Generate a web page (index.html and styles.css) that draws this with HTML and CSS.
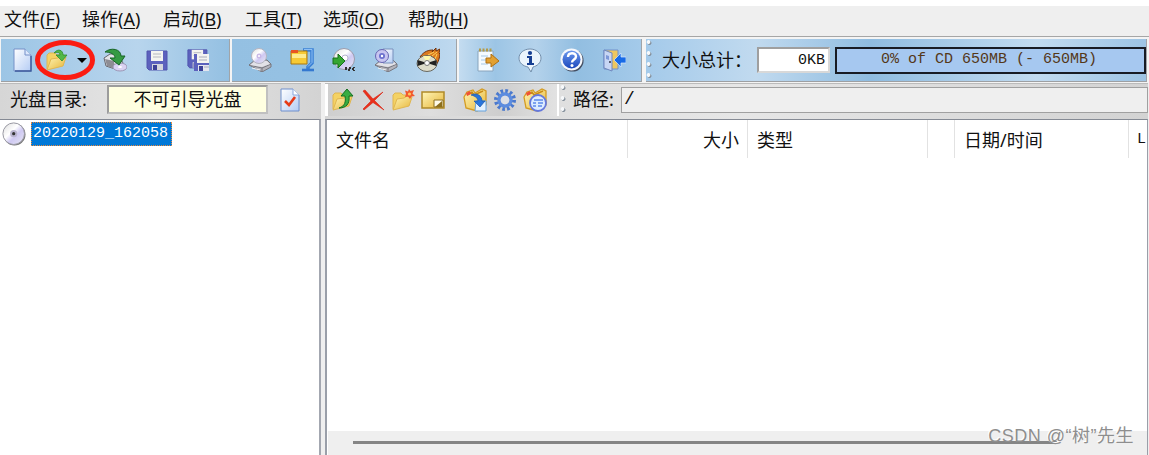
FILE: index.html
```html
<!DOCTYPE html>
<html lang="zh-CN">
<head>
    <meta charset="UTF-8">
    <meta name="viewport" content="width=device-width, initial-scale=1.0">
    <title>20220129_162058</title>
    <link rel="stylesheet" href="styles.css">
</head>
<body>
    <!-- shared gradients and the pieces several icons reuse -->
    <svg class="defs" width="0" height="0">
        <defs>
            <linearGradient id="paper" x1="0" y1="0" x2="1" y2="1">
                <stop offset="0" stop-color="#ffffff"/>
                <stop offset="1" stop-color="#b4ccf4"/>
            </linearGradient>
            <linearGradient id="gold" x1="0" y1="0" x2="1" y2="1">
                <stop offset="0" stop-color="#fff6b8"/>
                <stop offset="1" stop-color="#e6b436"/>
            </linearGradient>
            <linearGradient id="disc" x1="0" y1="0" x2="1" y2="1">
                <stop offset="0" stop-color="#dcdcdc"/>
                <stop offset=".4" stop-color="#ffffff"/>
                <stop offset=".6" stop-color="#cfc9f2"/>
                <stop offset="1" stop-color="#e8e8f4"/>
            </linearGradient>
            <linearGradient id="blue" x1="0" y1="0" x2="0" y2="1">
                <stop offset="0" stop-color="#6a98ee"/>
                <stop offset="1" stop-color="#1c48bc"/>
            </linearGradient>
            <g id="folder">
                <path d="M2 21V7l2-2h6l2 2h7v4" fill="#f4d264" stroke="#e0b650"/>
                <path d="M2 22l4-11 7-1 3-2 5 1-3 9z" fill="url(#gold)" stroke="#e0b650"/>
            </g>
            <g id="drive">
                <path d="M1 17l6-5h12l4 4v3l-9 5z" fill="#b4b4bc" stroke="#77777f"/>
                <path d="M1 17l13 3 9-4M14 20v4" fill="none" stroke="#77777f"/>
                <path d="M2 17l5-4h12l3 3-8 3z" fill="#e2e2e8"/>
                <path d="M4 20l8 2" stroke="#f4f4f6"/>
            </g>
            <g id="floppy">
                <path d="M2 3h20v19H4l-2-2z" fill="#5c61bd" stroke="#5155ae"/>
                <path d="M6 3h12v10H6z" fill="#f4f4f0"/>
                <path d="M8 6h8M8 9h8" stroke="#b6b8c0"/>
                <path d="M7 16h11v6H7z" fill="#d5d6dc"/>
                <path d="M8 17h4v5H8z" fill="#3d4196"/>
            </g>
            <g id="folderback">
                <path d="M3 20L1 9l3-5 6-2 2 3 7-4 4 2v14l-9 6z" fill="url(#gold)" stroke="#d49b22" stroke-width="1.3"/>
                <path d="M4 7l5-3 2 3 9-4" fill="none" stroke="#c98b18" stroke-width="1.5"/>
                <path d="M3 5l4-2 1 3-4 2z" fill="#ef5136"/>
            </g>
        </defs>
    </svg>

    <div class="window">
        <div class="menubar">
            <span>文件(<u>F</u>)</span>
            <span>操作(<u>A</u>)</span>
            <span>启动(<u>B</u>)</span>
            <span>工具(<u>T</u>)</span>
            <span>选项(<u>O</u>)</span>
            <span>帮助(<u>H</u>)</span>
        </div>

        <div class="toolbar">
            <div class="group group-file">
                <svg class="icon" viewBox="0 0 24 24">
                    <path d="M3 1h11l6 6v16H3z" fill="url(#paper)" stroke="#7590c8"/>
                    <path d="M20 8v15H4" fill="none" stroke="#3d5a9c" stroke-width="1.4"/>
                    <path d="M14 1v6h6" fill="#dce8fc" stroke="#7590c8"/>
                </svg>
                <div class="open">
                    <svg class="icon" viewBox="0 0 24 24">
                        <use href="#folder"/>
                        <path d="M9 5c4-5 9-3 9 2h4l-5 6-6-6h4c0-3-3-3-6-2z" fill="#52b848" stroke="#2f8d32" stroke-width=".8"/>
                    </svg>
                    <span class="arrow"></span>
                    <svg class="ring" viewBox="0 0 60 40">
                        <ellipse cx="30" cy="20" rx="27.500" ry="17.500" fill="none" stroke="#fb1c12" stroke-width="5"/>
                    </svg>
                </div>
                <svg class="icon" viewBox="0 0 24 24">
                    <path d="M1 10l6-4h8l5 9-8 6-9-3z" fill="#e4e4e8" stroke="#66666c"/>
                    <path d="M2 11l9 2 1 8-8-3z" fill="#8d8d94"/>
                    <ellipse cx="17" cy="19" rx="7" ry="4" fill="#d9d2f2" stroke="#9b96b4"/>
                    <ellipse cx="17" cy="19" rx="2" ry="1" fill="#fff"/>
                    <path d="M2 4c6-5 16-3 16 4h4l-6 9-9-7h5c0-4-5-6-10-6z" fill="#359a42" stroke="#176526"/>
                </svg>
                <svg class="icon" viewBox="0 0 24 24"><use href="#floppy"/></svg>
                <svg class="icon" viewBox="0 0 24 24">
                    <use href="#floppy" transform="translate(-1 -1) scale(.95)"/>
                    <path d="M7 6h15v17H7z" fill="#5c61bd"/>
                    <path d="M10 6h12v9H10z" fill="#f4f4f0"/>
                    <path d="M12 9h8M12 12h8" stroke="#aaacbc"/>
                    <path d="M11 17h11v6H11z" fill="#e5e6ee"/>
                    <path d="M12 18h4v5h-4z" fill="#3d4196"/>
                    <path d="M17 19h5" stroke="#aaacbc"/>
                </svg>
            </div>

            <div class="group group-tools">
                <svg class="icon" viewBox="0 0 24 24">
                    <use href="#drive"/>
                    <circle cx="11" cy="8" r="7.5" fill="url(#disc)" stroke="#b4b4c0"/>
                    <circle cx="11" cy="8" r="2.5" fill="#c9b8e6"/>
                    <circle cx="11" cy="8" r="1" fill="#fff"/>
                </svg>
                <svg class="icon" viewBox="0 0 24 24">
                    <path d="M13 2h9v13l-4 4v3" fill="none" stroke="#3d82d6" stroke-width="3.600"/>
                    <path d="M14 1.500h8v13l-4 4" fill="none" stroke="#8ec0f4"/>
                    <path d="M12 22h12" stroke="#3478d0" stroke-width="2.600"/>
                    <path d="M1 3h16v13H1z" fill="#f7ca35" stroke="#a97810"/>
                    <path d="M2 6h14v4H2z" fill="#fdec91"/>
                    <path d="M1 2h7v3H1z" fill="#e85424"/>
                </svg>
                <svg class="icon" viewBox="0 0 24 24">
                    <circle cx="12" cy="11" r="10.5" fill="url(#disc)" stroke="#9c9cac"/>
                    <circle cx="13" cy="10" r="3" fill="#fff" stroke="#b7b3ce"/>
                    <path d="M1 10h5V6l7 7-7 7v-4H1z" fill="#35a632" stroke="#16701b"/>
                    <path d="M13 19h2v3h-2zM17 19h2v2h-2zM16 21h2v2h-2zM21 19h2v1h-2zM20 20h2v2h-2zM21 22h2v1h-2z" fill="#333"/>
                </svg>
                <svg class="icon" viewBox="0 0 24 24">
                    <use href="#drive"/>
                    <path d="M9 1h10v14H9z" fill="url(#paper)" stroke="#7890bc"/>
                    <circle cx="8" cy="8" r="6.5" fill="#c8c5f0" stroke="#6665b2"/>
                    <circle cx="8" cy="8" r="3" fill="#6c71ce"/>
                    <circle cx="8" cy="8" r="1.2" fill="#fff"/>
                </svg>
                <svg class="icon" viewBox="0 0 24 24">
                    <path d="M4 9C8 3 13 2 17 2l-1 2 4-4v3l4-2-1 4 1 1c-1 8-4 13-9 14z" fill="#dc7b20" stroke="#70300b"/>
                    <path d="M12 7l6-3M16 8l5-4M19 11l2-5" stroke="#ffd55c"/>
                    <ellipse cx="11" cy="15.500" rx="10" ry="8" fill="#dddccb" stroke="#686860"/>
                    <path d="M11 15L1.500 12v6zM11 15l9.500-3v6z" fill="#222"/>
                    <path d="M11 15L7 8h8z" fill="#fff8a8"/>
                    <circle cx="11" cy="15" r="2.500" fill="#fff" stroke="#777"/>
                </svg>
            </div>

            <div class="group group-help">
                <svg class="icon" viewBox="0 0 24 24">
                    <path d="M2 3h15v20H2z" fill="#f5fbff" stroke="#89a4bc"/>
                    <path d="M3 2h13" stroke="#b49b48" stroke-width="3" stroke-dasharray="2 1.5"/>
                    <path d="M5 8h7M5 12h5M5 16h7" stroke="#a5c7e4"/>
                    <path d="M10 10h5V6l8 7-8 6v-4h-5z" fill="#e2a132" stroke="#af7013"/>
                </svg>
                <svg class="icon" viewBox="0 0 24 24">
                    <path d="M12 1c6 0 11 4 11 9s-4 8-8 9l-2 5-3-5C5 18 1 15 1 10s5-9 11-9z" fill="#eaf4fc" stroke="#738fac"/>
                    <circle cx="12" cy="5" r="2.1" fill="#173f92"/>
                    <path d="M9 8h5v7h2v2H9v-2h2v-5H9z" fill="#173f92"/>
                </svg>
                <svg class="icon" viewBox="0 0 24 24">
                    <circle cx="12.6" cy="12.6" r="11" fill="#444e62"/>
                    <circle cx="11.5" cy="11.5" r="11" fill="#f6f8fc"/>
                    <circle cx="11.5" cy="11.5" r="9" fill="url(#blue)"/>
                    <path d="M8 9c0-5 8-5 8-.5 0 3-4 3-4 6" fill="none" stroke="#fff" stroke-width="2.4"/>
                    <circle cx="12" cy="17.5" r="1.5" fill="#fff"/>
                </svg>
                <svg class="icon" viewBox="0 0 24 24">
                    <path d="M2 2h14v19H2z" fill="#edc760" stroke="#7191cc"/>
                    <path d="M2 2l8 3v18l-8-3z" fill="#c8d6f4" stroke="#6f87be"/>
                    <path d="M4 7l3 1v4l-3-1z" fill="#7d98d8"/>
                    <circle cx="8" cy="14" r="1" fill="#334"/>
                    <path d="M24 9h-5V5l-7 7 7 7v-4h5z" fill="#176ae6" stroke="#d7e8ff" stroke-width=".7"/>
                </svg>
            </div>

            <div class="group group-size">
                <span class="grip"></span>
                <span class="size-label">大小总计：</span>
                <span class="size-value">0KB</span>
                <span class="capacity">0% of CD 650MB (- 650MB)</span>
            </div>
        </div>

        <div class="panes">
            <div class="pane-left">
                <div class="subbar">
                    <span class="dir-label">光盘目录:</span>
                    <span class="boot">不可引导光盘</span>
                    <svg class="check" viewBox="0 0 20 24">
                        <path d="M1 1h12l6 6v16H1z" fill="url(#paper)" stroke="#6e8fcc"/>
                        <path d="M13 1v6h6" fill="#fff" stroke="#8ba8dc"/>
                        <path d="M5 13l4 4 6-8" fill="none" stroke="#e63a18" stroke-width="2.6"/>
                    </svg>
                </div>
                <div class="tree">
                    <svg class="icon" viewBox="0 0 24 24">
                        <circle cx="12.5" cy="12.5" r="11" fill="#777"/>
                        <circle cx="11.7" cy="11.7" r="10.8" fill="url(#disc)" stroke="#9a9aa4"/>
                        <circle cx="11.7" cy="11.7" r="3.6" fill="#b9b4cf"/>
                        <circle cx="11.7" cy="11.7" r="1.6" fill="#333"/>
                    </svg>
                    <span class="node">20220129_162058</span>
                </div>
            </div>

            <div class="pane-right">
                <div class="subbar">
                    <div class="subicons">
                        <svg class="icon" viewBox="0 0 24 24">
                            <use href="#folder"/>
                            <path d="M8 20c6-2 7-6 6-12h-4l6-7 6 7h-4c1 8-3 12-10 12z" fill="#38ad42" stroke="#14701f"/>
                        </svg>
                        <svg class="icon" viewBox="0 0 24 24">
                            <path d="M2 3l2-1 8 9 10-7-8.500 8.500L23 22l-11-7.500L3 22l-1-1 8-8z" fill="#e9301c" stroke="#d8210f" stroke-width=".6"/>
                        </svg>
                        <svg class="icon" viewBox="0 0 24 24">
                            <use href="#folder"/>
                            <path d="M18 1l1.500 2L23 2l-1.500 3.500L24 8l-3.500.5L19 11l-2-2.500-3 .5 1-3-1-3.500 3 1z" fill="#f2592d"/>
                            <circle cx="18.500" cy="6" r="1.600" fill="#ffc65c"/>
                        </svg>
                        <svg class="icon" viewBox="0 0 24 24">
                            <path d="M1 4h22v16H1z" fill="url(#gold)" stroke="#b08a28" stroke-width="1.500"/>
                            <path d="M13 12h9v7h-9z" fill="#fffbe8" stroke="#8d701e"/>
                            <path d="M14 19l7-6v6z" fill="#8d701e"/>
                        </svg>
                        <svg class="icon gap" viewBox="0 0 24 24">
                            <use href="#folderback"/>
                            <path d="M13 13h10v10H12z" fill="#e4f2fe" stroke="#65a2de"/>
                            <path d="M8 7c6-3 11 1 11 6h3l-5 6-6-6h4c0-3-3-5-7-6z" fill="#2875da" stroke="#1957ae" stroke-width=".7"/>
                        </svg>
                        <svg class="icon" viewBox="0 0 24 24">
                            <circle cx="12" cy="12" r="9" fill="none" stroke="#4a79ce" stroke-width="4" stroke-dasharray="2.600 2.110"/>
                            <circle cx="12" cy="12" r="6" fill="none" stroke="#5c8cdf" stroke-width="3.400"/>
                            <circle cx="12" cy="12" r="4.300" fill="#dcdfe6"/>
                        </svg>
                        <svg class="icon" viewBox="0 0 24 24">
                            <use href="#folderback"/>
                            <circle cx="15" cy="15" r="8" fill="#dcebff" stroke="#6478dc" stroke-width="1.800"/>
                            <path d="M11 12h9M10 15h3m2 0h5M10 18h3m2 0h4" stroke="#5c8bea" stroke-width="1.500"/>
                        </svg>
                    </div>
                    <span class="grip grip-gray"></span>
                    <span class="path-label">路径:</span>
                    <span class="path">/</span>
                </div>
                <div class="list">
                    <div class="columns">
                        <span>文件名</span>
                        <span class="right">大小</span>
                        <span>类型</span>
                        <span></span>
                        <span>日期/时间</span>
                        <span class="lba">L</span>
                    </div>
                    <div class="scroll">
                        <div class="thumb"></div>
                    </div>
                </div>
            </div>
        </div>
        <div class="watermark">CSDN @“树”先生</div>
    </div>
</body>
</html>
```

FILE: styles.css
```css
* {
    box-sizing: border-box;
}

body {
    margin: 0;
    background-color: #fff;
    font-family: "Noto Sans", "Noto Sans CJK SC", sans-serif;
    font-size: 18px;
    color: #111;
}

.defs {
    position: absolute;
}

.window {
    position: relative;
    width: 1149px;
    height: 455px;
    padding-top: 6px;
    overflow: hidden;
    display: flex;
    flex-direction: column;
}

.menubar {
    height: 31px;
    flex: none;
    padding-left: 4px;
    background-color: #efefef;
    border-bottom: 1px solid #a6a6a6;
    display: grid;
    grid-template-columns: 78px 81px 82px 78px 85px 90px;
    line-height: 27px;
    white-space: nowrap;
}

.menubar u {
    text-decoration-thickness: 1px;
    text-underline-offset: 2px;
}

.icon {
    width: 24px;
    height: 24px;
    flex: none;
    display: block;
}

/* main toolbar */
.toolbar {
    height: 46px;
    flex: none;
    padding: 2px 2px 2px 1px;
    background-color: #f4f4f4;
    display: flex;
}

.group {
    height: 43px;
    flex: none;
    display: flex;
    align-items: center;
    border-bottom: 1px solid #9d9fa2;
    border-right: 1px solid #a0a4a8;
    margin-right: 2px;
    background: linear-gradient(90deg, #94c0e2, #96c2e4 45%, #bfd9ef);
}

.group-file {
    width: 229px;
    padding-left: 10px;
    gap: 18px;
    background: linear-gradient(90deg, #9cc5e5, #b8d5ed 60%, #94c0e2);
}

.open {
    position: relative;
    width: 50px;
    margin-left: -8px;
    margin-right: -10px;
    display: flex;
    align-items: center;
    gap: 8px;
}

.arrow {
    border: 5px solid transparent;
    border-top-color: #000;
    border-bottom: none;
}

.ring {
    position: absolute;
    left: -10px;
    top: -8px;
    width: 60px;
    height: 40px;
}

.group-tools {
    width: 225px;
    padding-left: 16px;
    gap: 18px;
}

.group-help {
    width: 183px;
    padding-left: 17px;
    gap: 18px;
    background: linear-gradient(90deg, #c4dcf0, #9cc5e5 20%, #b4d2eb 42%, #92bee1 65%, #a4caea);
}

.group-size {
    width: 501px;
    margin: 0 0 0 2px;
    background: linear-gradient(90deg, #a4caea, #c1daef 22%, #8fbce0 45%, #c2dbf0 78%, #9dc4e4);
}

.grip {
    width: 6px;
    height: 100%;
    flex: none;
    background:
        radial-gradient(circle at 2.5px 3px, #f6f8fa 1.5px, transparent 2.2px) 0 0 / 6px 11px,
        radial-gradient(circle at 3.5px 4px, #84909c 1.5px, transparent 2.4px) 0 0 / 6px 11px;
}

.grip-gray {
    height: 32px;
}

.size-label {
    width: 95px;
    margin-left: 10px;
    white-space: nowrap;
    position: relative;
    top: -1px;
}

.size-value {
    width: 73px;
    height: 26px;
    margin-right: 5px;
    padding-right: 3px;
    border: 2px solid #9f9f9f;
    border-right-color: #d8d8d8;
    border-bottom-color: #d8d8d8;
    background-color: #fff;
    font: 15px/23px "Liberation Mono", monospace;
    text-align: right;
}

.capacity {
    width: 311px;
    height: 27px;
    padding-left: 44px;
    border: 2px solid #181c24;
    background-color: #a6c8f0;
    color: #543718;
    font: 15px/22px "Liberation Mono", monospace;
    white-space: pre;
}

/* lower area */
.panes {
    flex: 1;
    display: flex;
    background-color: #efefef;
}

.pane-left {
    width: 321px;
    margin-right: 4px;
    display: flex;
    flex-direction: column;
}

.pane-right {
    width: 823px;
    display: flex;
    flex-direction: column;
}

.subbar {
    height: 36px;
    flex: none;
    padding-bottom: 4px;
    display: flex;
    align-items: center;
    border-top: 1px solid #bbb;
    background: linear-gradient(90deg, #d6d6d6, #e6e6e6 50%, #d3d3d3);
}

.dir-label {
    width: 97px;
    margin-left: 10px;
    line-height: 24px;
    padding-bottom: 2px;
    white-space: nowrap;
}

.boot {
    width: 161px;
    height: 29px;
    border: 2px solid #9c9c9c;
    border-right-color: #c0c0c0;
    border-bottom-color: #c0c0c0;
    background-color: #ffffe1;
    line-height: 24px;
    text-align: center;
}

.check {
    width: 20px;
    height: 24px;
    margin-left: 12px;
}

.tree {
    flex: 1;
    padding: 2px 0 0 2px;
    border-top: 1px solid #858a94;
    border-right: 2px solid #a3a7b0;
    background-color: #fff;
    display: flex;
    align-items: flex-start;
}

.node {
    height: 24px;
    margin-left: 5px;
    padding: 0 3px 0 1px;
    border: 1px dotted #e98a3c;
    background-color: #0078d7;
    color: #fff;
    font: 15px/22px "Liberation Mono", monospace;
}

.subicons {
    width: 234px;
    height: 32px;
    padding-left: 3px;
    margin-right: 1px;
    border-left: 3px solid #fff;
    border-right: 2px solid #fff;
    display: flex;
    align-items: center;
    gap: 6px;
    background: linear-gradient(90deg, #cfcfcf, #dedede 45%, #cecece 75%, #e2e2e2);
}

.subicons .gap {
    margin-left: 12px;
}

.path-label {
    width: 48px;
    margin-left: 7px;
    line-height: 24px;
    padding-bottom: 2px;
    white-space: nowrap;
}

.path {
    flex: 1;
    height: 26px;
    padding-left: 2px;
    border: 1px solid #a0a0a0;
    background-color: #efefef;
    font: 18px/23px "Liberation Mono", monospace;
}

.list {
    flex: 1;
    border: 2px solid #9a9fa9;
    border-top: 1px solid #858a94;
    border-right-width: 1px;
    border-bottom: none;
    background-color: #fff;
    display: flex;
    flex-direction: column;
}

.columns {
    height: 38px;
    display: grid;
    grid-template-columns: 301px 120px 180px 27px 174px 18px;
    line-height: 40px;
    overflow: hidden;
}

.columns span {
    padding-left: 9px;
    border-right: 1px solid #e2e2e2;
    overflow: hidden;
    white-space: nowrap;
}

.columns .right {
    padding: 0 8px 0 0;
    text-align: right;
}

.columns .lba {
    padding-left: 8px;
    border-right: none;
    font-family: "Liberation Mono", monospace;
    font-size: 15px;
}

.scroll {
    height: 24px;
    margin-top: auto;
    margin-left: 1px;
    padding: 10px 0 0 25px;
    background-color: #efefef;
}

.thumb {
    width: 704px;
    height: 3px;
    background-color: #858585;
}

.watermark {
    position: absolute;
    right: 15px;
    bottom: 5px;
    font: 18px/27px "Liberation Sans", "Noto Sans CJK SC", sans-serif;
    letter-spacing: 0.5px;
    color: #8e8e8e;
    text-shadow: -1px -1px 0 #fff;
}
```
